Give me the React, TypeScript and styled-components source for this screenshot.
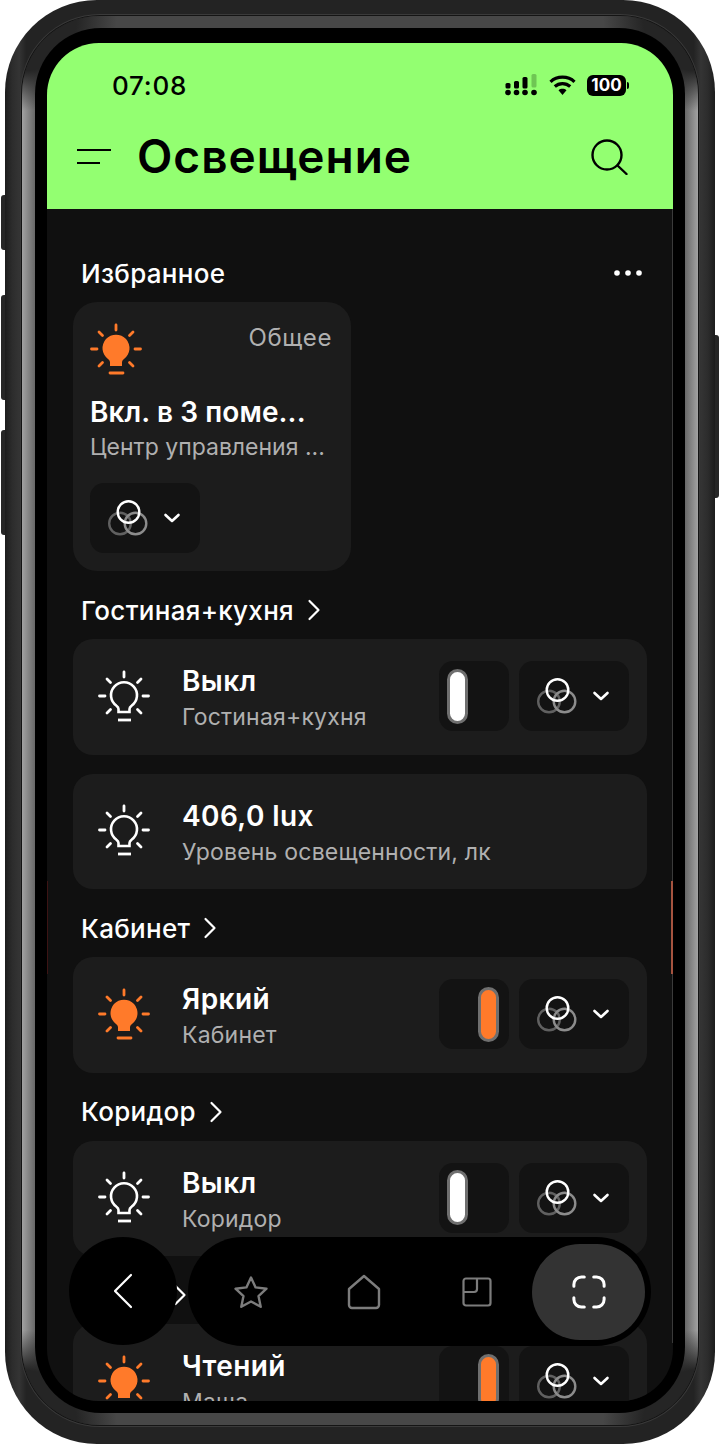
import React from "react";
import styled, { createGlobalStyle } from "styled-components";

const Global = createGlobalStyle`
  html, body { margin: 0; padding: 0; background: #fff; }
  body { width: 720px; height: 1444px; overflow: hidden; font-family: Inter, "Noto Sans", sans-serif; }
  * { box-sizing: border-box; }
`;

const Stage = styled.div`
  position: relative;
  width: 720px;
  height: 1444px;
  padding: 0 5px;
`;
const SideButton = styled.div<{ $side: "left" | "right"; $top: number; $h: number }>`
  position: absolute;
  ${(p) => p.$side}: 1px;
  top: ${(p) => p.$top}px;
  height: ${(p) => p.$h}px;
  width: 8px;
  background: #262626;
  border-radius: 3px;
`;
const Shell = styled.div`
  position: relative;
  height: 1444px;
  border-radius: 92px;
  background: linear-gradient(90deg, #1c1c1c 0, #2c2c2c 1%, #343434 2%, #232323 3%, #232323 97%, #343434 98%, #2c2c2c 99%, #1c1c1c 100%);
  padding: 16px 17px 19px 17px;
`;
const Bezel = styled.div`
  height: 100%;
  border-radius: 78px;
  padding: 12px 13px;
  box-shadow: 0 0 0 1px #141414, 0 0 0 2px #3a3a3a;
  background:
    radial-gradient(circle at 0 0, #252525 55px, transparent 95px),
    radial-gradient(circle at 100% 0, #252525 55px, transparent 95px),
    radial-gradient(circle at 0 100%, #252525 55px, transparent 95px),
    radial-gradient(circle at 100% 100%, #252525 55px, transparent 95px),
    linear-gradient(90deg, #a2a2a2 0, #666 2%, #474747 4%, #474747 96%, #666 98%, #a2a2a2 100%);
`;
const Glass = styled.div`
  height: 100%;
  border-radius: 66px;
  background: #000;
  padding: 15px 12px 12px;
`;
const Screen = styled.div`
  position: relative;
  height: 100%;
  border-radius: 52px;
  overflow: hidden;
  background: #101010;
`;
const EdgeLine = styled.div`
  position: absolute;
  right: 0;
  top: 166px;
  width: 1px;
  height: 1134px;
  background: #3a3a3a;
`;
const EdgeGlow = styled.div<{ $side: "left" | "right" }>`
  position: absolute;
  ${(p) => p.$side}: 0;
  top: 838px;
  width: ${(p) => (p.$side === "right" ? "2px" : "1px")};
  height: 93px;
  background: ${(p) => (p.$side === "right" ? "#a5533f" : "#3c1414")};
`;
const Header = styled.header`
  height: 166px;
  background: #93ff71;
  color: #000;
  padding: 26px 45px 0 30px;
`;
const StatusBar = styled.div`
  display: flex;
  align-items: center;
  justify-content: space-between;
  height: 32px;
  padding-left: 35px;
`;
const Time = styled.span`
  font-size: 26px;
  font-weight: 500;
  letter-spacing: 0.8px;
`;
const StatusIcons = styled.div`
  display: flex;
  align-items: center;
  gap: 11px;
`;
const Battery = styled.div`
  position: relative;
  width: 39px;
  height: 21px;
  border-radius: 6px;
  background: #000;
  color: #fff;
  font-size: 17px;
  font-weight: 700;
  line-height: 21px;
  text-align: center;
  margin-right: 2px;
  &::after {
    content: "";
    position: absolute;
    right: -3px;
    top: 7px;
    width: 2px;
    height: 7px;
    border-radius: 0 2px 2px 0;
    background: #000;
  }
`;
const TitleBar = styled.div`
  display: flex;
  align-items: center;
  margin-top: 24px;
  height: 60px;
`;
const Title = styled.h1`
  margin: 2px 0 0 24px;
  flex: 1;
  font-size: 46px;
  font-weight: 600;
  letter-spacing: 1px;
`;
const Content = styled.main`
  padding: 46px 26px 0;
  display: flex;
  flex-direction: column;
`;
const SectionHead = styled.div`
  display: flex;
  align-items: center;
  justify-content: space-between;
  height: 36px;
  margin: 21px 0 11px;
  padding: 0 4px 0 8px;
  &:first-child { margin-top: 0; }
`;
const SectionName = styled.div<{ $gap?: number }>`
  display: flex;
  align-items: center;
  gap: ${(p) => p.$gap ?? 13}px;
  color: #fff;
  font-size: 26px;
  font-weight: 500;
  letter-spacing: 0.3px;
`;
const FavCard = styled.section`
  width: 278px;
  height: 269px;
  border-radius: 24px;
  background: #1c1c1c;
  padding: 21px 19px 18px 17px;
  display: flex;
  flex-direction: column;
`;
const FavTop = styled.div`
  display: flex;
  justify-content: space-between;
  height: 54px;
`;
const FavLabel = styled.span`
  color: #b0b0b0;
  font-size: 24px;
  letter-spacing: 0.6px;
  line-height: 30px;
`;
const FavTitle = styled.div`
  margin-top: 16px;
  color: #fff;
  font-size: 28px;
  font-weight: 600;
  letter-spacing: 0.1px;
  line-height: 38px;
  white-space: nowrap;
`;
const FavSub = styled.div`
  color: #b0b0b0;
  font-size: 23px;
  line-height: 32px;
  white-space: nowrap;
`;
const FavFooter = styled.div`
  margin-top: auto;
`;
const Row = styled.section`
  display: flex;
  align-items: center;
  height: 115.5px;
  flex: none;
  border-radius: 20px;
  background: #1c1c1c;
  padding: 0 18px 0 25px;
  & + & { margin-top: 19px; }
`;
const RowText = styled.div`
  flex: 1;
  margin-left: 32px;
  padding-top: 5px;
`;
const RowTitle = styled.div`
  color: #fff;
  font-size: 28px;
  font-weight: 600;
  letter-spacing: 0.4px;
  line-height: 37px;
`;
const RowSub = styled.div`
  color: #b0b0b0;
  font-size: 23px;
  letter-spacing: 0.2px;
  line-height: 35px;
`;
const Controls = styled.div`
  display: flex;
  gap: 10px;
  margin-bottom: 1px;
`;
const ToggleBox = styled.div<{ $on?: boolean }>`
  width: 70px;
  height: 70px;
  border-radius: 14px;
  background: #131313;
  display: flex;
  align-items: center;
  justify-content: ${(p) => (p.$on ? "flex-end" : "flex-start")};
  padding: 0 10px 0 8px;
`;
const Knob = styled.div<{ $on?: boolean }>`
  width: 21px;
  height: 55px;
  border-radius: 11px;
  border: 3px solid #6f6f6f;
  background: ${(p) => (p.$on ? "#ff7a2a" : "#fff")};
`;
const DropBox = styled.div`
  width: 110px;
  height: 70px;
  border-radius: 14px;
  background: #131313;
  display: flex;
  align-items: center;
  padding-left: 18px;
  gap: 13px;
`;
const Back = styled.div`
  position: absolute;
  left: 22px;
  top: 1194px;
  width: 108px;
  height: 108px;
  border-radius: 50%;
  background: #000;
  display: flex;
  align-items: center;
  justify-content: center;
`;
const Nav = styled.nav`
  position: absolute;
  left: 141px;
  top: 1194px;
  width: 463px;
  height: 109px;
  border-radius: 55px;
  background: #000;
  display: flex;
  align-items: center;
  padding: 0 6px;
`;
const NavSlot = styled.div<{ $active?: boolean }>`
  height: 96px;
  width: 113px;
  flex: none;
  border-radius: 48px;
  background: ${(p) => (p.$active ? "#333" : "transparent")};
  display: flex;
  align-items: center;
  justify-content: center;
  margin-left: ${(p) => (p.$active ? "-1px" : "0")};
`;

const Menu = () => (
  <svg width="36" height="22" viewBox="0 0 36 22" fill="none" stroke="#000" strokeWidth="2.2">
    <path d="M0 6h34M0 19h23" />
  </svg>
);
const Search = () => (
  <svg width="40" height="40" viewBox="0 0 40 40" fill="none" stroke="#000" strokeWidth="2.4" strokeLinecap="round">
    <circle cx="19" cy="20" r="14.5" />
    <path d="M29.5 30.5 38.5 39" />
  </svg>
);
const Signal = () => (
  <svg width="33" height="22" viewBox="0 0 33 22" fill="#000">
    <circle cx="3" cy="18.5" r="2.8" /><circle cx="11.5" cy="18.5" r="2.8" /><circle cx="20" cy="18.5" r="2.8" /><circle cx="29" cy="18.5" r="2.8" />
    <rect x="0.5" y="9" width="5" height="5.5" rx="1.5" /><rect x="9" y="7" width="5" height="7.5" rx="1.5" />
    <rect x="17.5" y="3" width="5" height="11.5" rx="1.5" />
    <rect x="26.5" y="0" width="5" height="13.5" rx="1.5" fill="#6fc654" />
  </svg>
);
const Wifi = () => (
  <svg width="27" height="21" viewBox="0 0 27 21" fill="none" stroke="#000" strokeWidth="3.2">
    <path d="M1.5 6.8C8 .6 19 .6 25.5 6.8M5.8 11.5c4.3-3.9 11.1-3.9 15.4 0" />
    <path d="M9.5 15.2c2.3-1.9 5.7-1.9 8 0L13.5 20z" fill="#000" stroke="none" />
  </svg>
);
const Bulb = ({ on }: { on?: boolean }) => {
  const c = on ? "#ff7a2a" : "#fff";
  return (
    <svg width="52" height="54" viewBox="0 0 52 54" fill="none" stroke={c} strokeWidth="2.6" strokeLinecap="round">
      <path d="M26 2v5M1.5 26h5.5M45 26h5.5M9 9l3.5 3.5M43 9l-3.5 3.5M9 43l3.5-3.5M43 43l-3.5-3.5" strokeWidth="2.8" />
      <path
        d={on
          ? "M20 43v-3.5c0-1.6-.8-2.5-2-3.5a13.5 13.5 0 1 1 16 0c-1.2 1-2 1.9-2 3.5V43z"
          : "M20.5 42v-3c0-1.5-.8-2.4-2-3.2a13 13 0 1 1 15 0c-1.2.8-2 1.7-2 3.2v3z"}
        fill={on ? c : "none"}
        stroke={on ? "none" : c}
      />
      <path d="M20 50h13" strokeWidth="2.8" strokeLinecap={on ? "round" : "butt"} />
    </svg>
  );
};
const Colors = () => (
  <svg width="42" height="40" viewBox="0 0 42 40" fill="none" strokeWidth="2.4">
    <circle cx="12" cy="25.5" r="10.8" stroke="#606060" />
    <circle cx="27.5" cy="25.5" r="10.8" stroke="#8c8c8c" />
    <circle cx="20.5" cy="14" r="10.8" stroke="#fff" />
  </svg>
);
const ChevDown = () => (
  <svg width="18" height="12" viewBox="0 0 18 12" fill="none" stroke="#fff" strokeWidth="2.6" strokeLinecap="round" strokeLinejoin="round">
    <path d="M2.5 3 9 9l6.5-6" />
  </svg>
);
const ChevRight = () => (
  <svg width="14" height="22" viewBox="0 0 14 22" fill="none" stroke="#fff" strokeWidth="2.2" strokeLinecap="round" strokeLinejoin="round">
    <path d="m2.5 2 9 9-9 9" />
  </svg>
);
const Dots = () => (
  <svg width="30" height="8" viewBox="0 0 30 8" fill="#fff">
    <circle cx="4" cy="4" r="2.8" /><circle cx="15" cy="4" r="2.8" /><circle cx="26" cy="4" r="2.8" />
  </svg>
);
const BackIcon = () => (
  <svg width="20" height="36" viewBox="0 0 20 36" fill="none" stroke="#fff" strokeWidth="2.2" strokeLinecap="round" strokeLinejoin="round">
    <path d="M18 2 2 18l16 16" />
  </svg>
);
const Star = () => (
  <svg width="36" height="34" viewBox="0 0 36 34" fill="none" stroke="#7c7c7c" strokeWidth="2.4" strokeLinejoin="round">
    <path d="M18 2.5 22.6 12.4 33.5 13.7 25.5 21.1 27.7 31.8 18 26.5 8.3 31.8 10.5 21.1 2.5 13.7 13.4 12.4Z" />
  </svg>
);
const House = () => (
  <svg width="34" height="36" viewBox="0 0 34 36" fill="none" stroke="#7c7c7c" strokeWidth="2.4" strokeLinejoin="round">
    <path d="M17 2 2 15v16a3 3 0 0 0 3 3h24a3 3 0 0 0 3-3V15z" />
  </svg>
);
const Rooms = () => (
  <svg width="30" height="30" viewBox="0 0 30 30" fill="none" stroke="#7c7c7c" strokeWidth="2.2">
    <rect x="1.5" y="1.5" width="27" height="27" rx="2.5" />
    <path d="M15 1.5V12a3 3 0 0 1-3 3H1.5" />
  </svg>
);
const Focus = () => (
  <svg width="34" height="34" viewBox="0 0 36 36" fill="none" stroke="#fff" strokeWidth="3.2" strokeLinecap="round">
    <path d="M2 12V10a8 8 0 0 1 8-8h3M23 2h3a8 8 0 0 1 8 8v2M34 24v2a8 8 0 0 1-8 8h-3M13 34h-3a8 8 0 0 1-8-8v-2" />
  </svg>
);

const Dropdown = () => (
  <DropBox>
    <Colors />
    <ChevDown />
  </DropBox>
);

type RowData = { title: string; sub: string; on?: boolean; sensor?: boolean };

const LightRow = ({ title, sub, on, sensor }: RowData) => (
  <Row>
    <Bulb on={on} />
    <RowText>
      <RowTitle>{title}</RowTitle>
      <RowSub>{sub}</RowSub>
    </RowText>
    {!sensor && (
      <Controls>
        <ToggleBox $on={on}>
          <Knob $on={on} />
        </ToggleBox>
        <Dropdown />
      </Controls>
    )}
  </Row>
);

const Head = ({ name, gap }: { name: string; gap?: number }) => (
  <SectionHead>
    <SectionName $gap={gap}>
      {name}
      <ChevRight />
    </SectionName>
  </SectionHead>
);

export default function App() {
  return (
    <Stage>
      <Global />
      <SideButton $side="left" $top={195} $h={55} />
      <SideButton $side="left" $top={295} $h={105} />
      <SideButton $side="left" $top={430} $h={105} />
      <SideButton $side="right" $top={335} $h={163} />
      <Shell>
        <Bezel>
          <Glass>
            <Screen>
              <Header>
                <StatusBar>
                  <Time>07:08</Time>
                  <StatusIcons>
                    <Signal />
                    <Wifi />
                    <Battery>100</Battery>
                  </StatusIcons>
                </StatusBar>
                <TitleBar>
                  <Menu />
                  <Title>Освещение</Title>
                  <Search />
                </TitleBar>
              </Header>
              <Content>
                <SectionHead>
                  <SectionName>Избранное</SectionName>
                  <Dots />
                </SectionHead>
                <FavCard>
                  <FavTop>
                    <Bulb on />
                    <FavLabel>Общее</FavLabel>
                  </FavTop>
                  <FavTitle>Вкл. в 3 поме...</FavTitle>
                  <FavSub>Центр управления ...</FavSub>
                  <FavFooter>
                    <Dropdown />
                  </FavFooter>
                </FavCard>
                <Head name="Гостиная+кухня" />
                <LightRow title="Выкл" sub="Гостиная+кухня" />
                <LightRow title="406,0 lux" sub="Уровень освещенности, лк" sensor />
                <Head name="Кабинет" />
                <LightRow title="Яркий" sub="Кабинет" on />
                <Head name="Коридор" />
                <LightRow title="Выкл" sub="Коридор" />
                <Head name="Маша" gap={16} />
                <LightRow title="Чтений" sub="Маша" on />
              </Content>
              <EdgeLine />
              <EdgeGlow $side="left" />
              <EdgeGlow $side="right" />
              <Back>
                <BackIcon />
              </Back>
              <Nav>
                <NavSlot><Star /></NavSlot>
                <NavSlot><House /></NavSlot>
                <NavSlot><Rooms /></NavSlot>
                <NavSlot $active><Focus /></NavSlot>
              </Nav>
            </Screen>
          </Glass>
        </Bezel>
      </Shell>
    </Stage>
  );
}
